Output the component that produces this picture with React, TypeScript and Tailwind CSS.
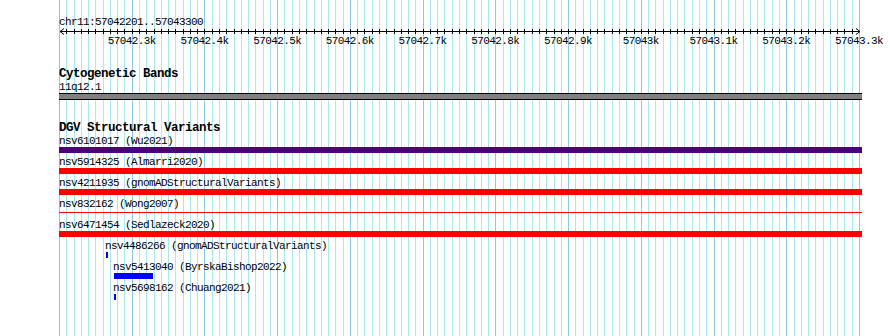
const LEFT = 59;
const VIEW_W = 800;
const STEPS = 110; // 10bp per step, 1100bp in view

const gx = (k: number) => Math.round(LEFT + (k * VIEW_W) / STEPS);

const tickLabels = [
  '57042.3k',
  '57042.4k',
  '57042.5k',
  '57042.6k',
  '57042.7k',
  '57042.8k',
  '57042.9k',
  '57043k',
  '57043.1k',
  '57043.2k',
  '57043.3k',
];

const Gridlines = () => (
  <svg width="890" height="336" className="absolute inset-0" shapeRendering="crispEdges">
    {Array.from({ length: STEPS + 1 }, (_, k) => (
      <line
        key={k}
        x1={gx(k) + 0.5}
        x2={gx(k) + 0.5}
        y1={0}
        y2={336}
        stroke={k % 10 === 0 ? '#8cc8ea' : '#a8e8ee'}
        strokeWidth={1}
      />
    ))}
  </svg>
);

const Axis = () => (
  <svg width="803" height="7" className="block" shapeRendering="crispEdges">
    <line x1={1} x2={801} y1={3.5} y2={3.5} stroke="#000" />
    {Array.from({ length: STEPS - 1 }, (_, i) => {
      const x = gx(i + 1) - LEFT + 0.5;
      return <line key={i} x1={x} x2={x} y1={1} y2={6} stroke="#000" />;
    })}
    <polyline points="5,0.5 1,3.5 5,6.5" fill="none" stroke="#000" shapeRendering="auto" />
    <polyline points="797,0.5 801,3.5 797,6.5" fill="none" stroke="#000" shapeRendering="auto" />
  </svg>
);

type Feature = {
  label: string;
  color: string;
  offset?: number; // px from view start
  width?: number;
  thin?: boolean;
};

const features: Feature[] = [
  { label: 'nsv6101017 (Wu2021)', color: 'bg-[#4b0082]' },
  { label: 'nsv5914325 (Almarri2020)', color: 'bg-[#ff0000]' },
  { label: 'nsv4211935 (gnomADStructuralVariants)', color: 'bg-[#ff0000]' },
  { label: 'nsv832162 (Wong2007)', color: 'bg-[#ff0000]', thin: true },
  { label: 'nsv6471454 (Sedlazeck2020)', color: 'bg-[#ff0000]' },
  { label: 'nsv4486266 (gnomADStructuralVariants)', color: 'bg-[#0000ff]', offset: 47, width: 2 },
  { label: 'nsv5413040 (ByrskaBishop2022)', color: 'bg-[#0000ff]', offset: 55, width: 39 },
  { label: 'nsv5698162 (Chuang2021)', color: 'bg-[#0000ff]', offset: 55, width: 2 },
];

const FeatureRow = ({ f }: { f: Feature }) => (
  <div className="pb-[3px]" style={{ paddingLeft: f.offset ? f.offset - 1 : 0 }}>
    <div className="h-[12px] leading-[12px] text-[11px] tracking-[-0.6px] whitespace-nowrap">{f.label}</div>
    <div className="h-[6px]" style={{ paddingLeft: f.offset ? 1 : 0 }}>
      {f.thin ? (
        <div className="pt-[2px]">
          <div className={`h-[1px] w-[803px] ${f.color}`} />
        </div>
      ) : (
        <div className={`h-[6px] ${f.color}`} style={{ width: f.width ?? 803 }} />
      )}
    </div>
  </div>
);

export default function App() {
  return (
    <div className="relative w-[890px] h-[336px] overflow-hidden bg-white text-black font-['Liberation_Mono',monospace]">
      <Gridlines />
      <div className="relative pl-[59px] pt-[16px]">
        {/* ruler */}
        <div className="h-[12px] leading-[12px] text-[11px] tracking-[-0.6px]">chr11:57042201..57043300</div>
        <Axis />
        <div className="flex h-[12px] leading-[12px] text-[11px] tracking-[-0.6px] ml-[36.36px] whitespace-nowrap">
          {tickLabels.map((t) => (
            <div key={t} className="w-[72.727px] shrink-0 text-center">
              {t}
            </div>
          ))}
        </div>

        {/* cytoband track */}
        <div className="mt-[20px] h-[14px] leading-[14px] text-[12.5px] tracking-[-0.5px] font-bold">Cytogenetic Bands</div>
        <div className="h-[12px] leading-[12px] text-[11px] tracking-[-0.6px]">11q12.1</div>
        <div className="h-[7px] w-[803px] border-y border-black bg-[#808080]" />

        {/* variants track */}
        <div className="mt-[21px] h-[14px] leading-[14px] text-[12.5px] tracking-[-0.5px] font-bold">DGV Structural Variants</div>
        {features.map((f) => (
          <FeatureRow key={f.label} f={f} />
        ))}
      </div>
    </div>
  );
}
